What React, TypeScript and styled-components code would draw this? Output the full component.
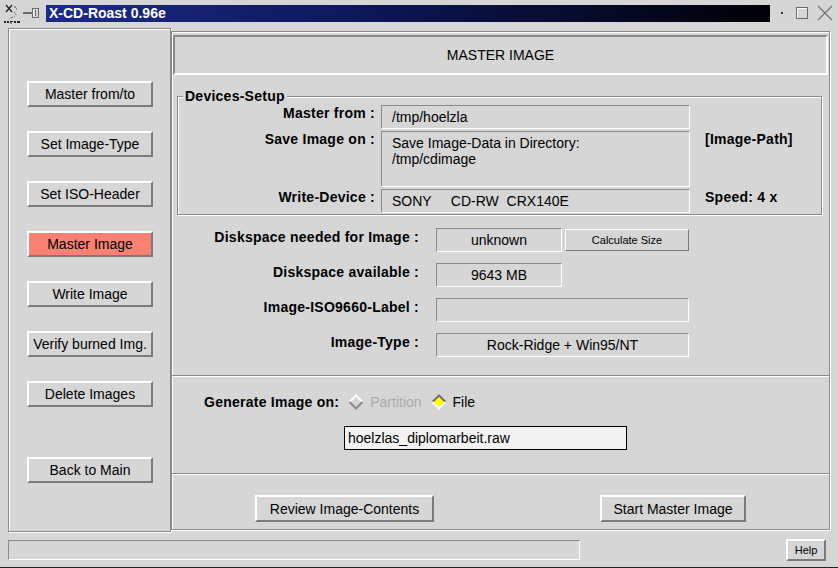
import React from "react";
import styled, { createGlobalStyle, css } from "styled-components";

const BG = "#d6d6d6";
const DARK = "#8a8a8a";

const GlobalStyle = createGlobalStyle`
  html, body { margin: 0; padding: 0; background: ${BG}; }
  body {
    font-family: "Liberation Sans", Arial, Helvetica, sans-serif;
    font-size: 14px;
    color: #000;
  }
  * { box-sizing: border-box; }
`;

const raised = css`
  border-style: solid;
  border-color: #fff #7a7a7a #7a7a7a #fff;
`;

const sunken = css`
  border-style: solid;
  border-color: ${DARK} #fff #fff ${DARK};
`;

const etched = css`
  border: 1px solid ${DARK};
  box-shadow: inset 1px 1px 0 #fff, 1px 1px 0 #fff;
`;

const Window = styled.div`
  width: 838px;
  height: 568px;
  display: flex;
  flex-direction: column;
  background: ${BG};
  border-bottom: 1px solid #222;
  overflow: hidden;
`;

const TitleBar = styled.div`
  height: 26px;
  flex: none;
  display: flex;
  align-items: center;
  padding-left: 3px;
`;

const TitleText = styled.div`
  width: 724px;
  height: 17px;
  margin-left: 6px;
  padding-left: 3px;
  background: linear-gradient(to right, #1b2b88 0%, #0d1656 45%, #000006 100%);
  color: #fff;
  font-weight: bold;
  font-size: 14px;
  line-height: 17px;
  white-space: nowrap;
`;

const WinControls = styled.svg`
  margin-left: 5px;
  flex: none;
`;

const Main = styled.div`
  flex: 1;
  display: flex;
  align-items: flex-start;
  padding: 2px 0 0 8px;
`;

const LeftPanel = styled.div`
  ${etched};
  width: 163px;
  height: 504px;
  display: flex;
  flex-direction: column;
  align-items: flex-start;
  padding: 52px 0 0 18px;
`;

const NavButton = styled.button<{ $active?: boolean; $apart?: boolean }>`
  ${raised};
  border-width: 2px;
  width: 126px;
  height: 26px;
  margin: ${(p) => (p.$apart ? "26px" : "0")} 0 24px 0;
  padding: 0;
  background: ${(p) => (p.$active ? "#fa8072" : BG)};
  font-family: inherit;
  font-size: 14px;
  color: #000;
  line-height: 20px;
  white-space: nowrap;
`;

const RightPanel = styled.div`
  ${etched};
  width: 659px;
  height: 499px;
  margin-top: 3px;
  display: flex;
  flex-direction: column;
`;

const Header = styled.div`
  ${sunken};
  border-width: 2px;
  height: 40px;
  margin: 3px 1px 0 1px;
  display: flex;
  align-items: center;
  justify-content: center;
  font-size: 14px;
`;

const Frame = styled.div`
  ${etched};
  margin: 21px 7px 0 5px;
  padding-bottom: 1px;
  display: flex;
  flex-direction: column;
`;

const FrameTitle = styled.div`
  align-self: flex-start;
  margin: -9px 0 0 5px;
  padding: 0 2px;
  background: ${BG};
  font-weight: bold;
  letter-spacing: 0.25px;
  line-height: 16px;
`;

const DeviceGrid = styled.div`
  display: grid;
  grid-template-columns: 203px 309px 1fr;
  grid-template-rows: 24px 56px 24px;
  row-gap: 2px;
  margin-top: 1px;
`;

const Label = styled.div<{ $pad?: number; $line?: number }>`
  font-weight: bold;
  letter-spacing: 0.25px;
  text-align: right;
  white-space: nowrap;
  padding-right: ${(p) => p.$pad ?? 6}px;
  line-height: ${(p) => p.$line ?? 16}px;
`;

const Note = styled.div`
  font-weight: bold;
  letter-spacing: 0.25px;
  padding-left: 15px;
  line-height: 16px;
  white-space: nowrap;
`;

const Field = styled.div<{ $center?: boolean; $wide?: boolean }>`
  ${sunken};
  border-width: 1px;
  white-space: pre;
  ${(p) =>
    p.$center
      ? css`
          text-align: center;
          line-height: 22px;
        `
      : css`
          padding: 3px 10px 0;
          line-height: 16px;
        `}
  ${(p) => p.$wide && "grid-column: 2 / span 2;"}
`;

const DiskGrid = styled.div`
  display: grid;
  grid-template-columns: 264px 126px 127px;
  grid-auto-rows: 24px;
  row-gap: 11px;
  margin-top: 13px;
  padding-bottom: 18px;
`;

const SmallButton = styled.button`
  ${raised};
  border-width: 1px;
  margin: 1px 0 1px 3px;
  padding: 0;
  background: ${BG};
  font-family: inherit;
  font-size: 11px;
  color: #000;
`;

const Separator = styled.div`
  height: 2px;
  flex: none;
  border-top: 1px solid ${DARK};
  border-bottom: 1px solid #fff;
`;

const GenerateSection = styled.div`
  display: flex;
  flex-direction: column;
  padding: 17px 0 23px 0;
`;

const RadioRow = styled.div`
  display: flex;
  align-items: center;
  padding-left: 32px;
  line-height: 16px;
  gap: 9px;
`;

const RadioOption = styled.span<{ $disabled?: boolean }>`
  display: inline-flex;
  align-items: center;
  gap: 6px;
  color: ${(p) => (p.$disabled ? "#a9a9a9" : "#000")};
`;

const FileInput = styled.input`
  width: 283px;
  height: 24px;
  margin: 16px 0 0 172px;
  padding: 0 3px;
  border: 1px solid #000;
  background: #f2f2f2;
  font-family: inherit;
  font-size: 14px;
  color: #000;
  outline: none;
`;

const ActionRow = styled.div`
  flex: 1;
  display: flex;
  justify-content: space-around;
  align-items: flex-start;
  padding-top: 20px;
`;

const ActionButton = styled.button<{ $w: number }>`
  ${raised};
  border-width: 2px;
  width: ${(p) => p.$w}px;
  height: 27px;
  padding: 0;
  background: ${BG};
  font-family: inherit;
  font-size: 14px;
  color: #000;
  white-space: nowrap;
`;

const StatusBar = styled.div`
  height: 34px;
  flex: none;
  display: flex;
  align-items: center;
  padding: 0 12px 0 8px;
`;

const StatusField = styled.div`
  ${sunken};
  border-width: 1px;
  width: 572px;
  height: 20px;
`;

const HelpButton = styled.button`
  ${raised};
  border-width: 2px;
  width: 40px;
  height: 22px;
  margin-left: auto;
  padding: 0;
  background: ${BG};
  font-family: inherit;
  font-size: 11px;
  color: #000;
`;

const Diamond: React.FC<{ selected?: boolean }> = ({ selected }) => {
  const upper = selected ? "#6e6e6e" : "#fff";
  const lower = selected ? "#fff" : "#8a8a8a";
  return (
    <svg width="16" height="16" viewBox="0 0 16 16">
      <path d="M8 1 L15 8 L8 15 L1 8 Z" fill={selected ? "#ffff00" : BG} />
      <path d="M1.5 8 L8 1.5 L14.5 8" stroke={upper} strokeWidth="2" fill="none" />
      <path d="M1.5 8 L8 14.5 L14.5 8" stroke={lower} strokeWidth="2" fill="none" />
    </svg>
  );
};

const AppLogo = () => (
  <svg width="20" height="22" viewBox="0 0 20 22" style={{ flex: "none" }}>
    <path d="M3 3 L9 10 M9 3 L3 10" stroke="#222" strokeWidth="1.3" />
    <path d="M11 10 Q15 13 10 15 Q5 16.5 7 18" stroke="#222" strokeWidth="1" strokeDasharray="1 1.4" fill="none" />
    <path d="M11 5 h2 M13 7 h1" stroke="#444" strokeWidth="1" />
    <rect x="1" y="19" width="2" height="2" fill="#222" />
    <rect x="4" y="19" width="2" height="2" fill="#222" />
    <rect x="7" y="19" width="3" height="1" fill="#222" />
    <rect x="7" y="20.5" width="2" height="1" fill="#222" />
    <rect x="11" y="19" width="2" height="2" fill="#222" />
    <rect x="14" y="19" width="3" height="2" fill="#222" />
  </svg>
);

const PinIcon = () => (
  <svg width="17" height="12" viewBox="0 0 17 12" style={{ flex: "none" }}>
    <path d="M0 6 H9" stroke="#6a6a6a" strokeWidth="2" />
    <rect x="9.5" y="1.5" width="6" height="9" fill="none" stroke="#6a6a6a" />
    <path d="M12.5 3 V9" stroke="#6a6a6a" />
    <path d="M10.5 2.5 V9.5" stroke="#fff" />
  </svg>
);

const App: React.FC = () => {
  return (
    <Window>
      <GlobalStyle />
      <TitleBar>
        <AppLogo />
        <PinIcon />
        <TitleText>X-CD-Roast 0.96e</TitleText>
        <WinControls width="60" height="16" viewBox="0 0 60 16">
          <rect x="6" y="7" width="2" height="2" fill="#333" />
          <rect x="21.5" y="2.5" width="11" height="11" fill="none" stroke="#6a6a6a" />
          <path d="M22.5 12.5 V3.5 H31.5" stroke="#fff" fill="none" />
          <path d="M43 1 L57 15 M57 1 L43 15" stroke="#777" strokeWidth="1.4" />
        </WinControls>
      </TitleBar>

      <Main>
        <LeftPanel>
          <NavButton>Master from/to</NavButton>
          <NavButton>Set Image-Type</NavButton>
          <NavButton>Set ISO-Header</NavButton>
          <NavButton $active>Master Image</NavButton>
          <NavButton>Write Image</NavButton>
          <NavButton>Verify burned Img.</NavButton>
          <NavButton>Delete Images</NavButton>
          <NavButton $apart>Back to Main</NavButton>
        </LeftPanel>

        <RightPanel>
          <Header>MASTER IMAGE</Header>

          <Frame>
            <FrameTitle>Devices-Setup</FrameTitle>
            <DeviceGrid>
              <Label>Master from :</Label>
              <Field>/tmp/hoelzla</Field>
              <div />
              <Label>Save Image on :</Label>
              <Field>{"Save Image-Data in Directory:\n/tmp/cdimage"}</Field>
              <Note>[Image-Path]</Note>
              <Label>Write-Device :</Label>
              <Field>{"SONY     CD-RW  CRX140E"}</Field>
              <Note>Speed: 4 x</Note>
            </DeviceGrid>
          </Frame>

          <DiskGrid>
            <Label $pad={17} $line={18}>Diskspace needed for Image :</Label>
            <Field $center>unknown</Field>
            <SmallButton>Calculate Size</SmallButton>
            <Label $pad={17} $line={18}>Diskspace available :</Label>
            <Field $center>9643 MB</Field>
            <div />
            <Label $pad={17} $line={18}>Image-ISO9660-Label :</Label>
            <Field $center $wide />
            <Label $pad={17} $line={18}>Image-Type :</Label>
            <Field $center $wide>Rock-Ridge + Win95/NT</Field>
          </DiskGrid>

          <Separator />

          <GenerateSection>
            <RadioRow>
              <Label $pad={0}>Generate Image on:</Label>
              <RadioOption $disabled>
                <Diamond />
                Partition
              </RadioOption>
              <RadioOption>
                <Diamond selected />
                File
              </RadioOption>
            </RadioRow>
            <FileInput readOnly value="hoelzlas_diplomarbeit.raw" />
          </GenerateSection>

          <Separator />

          <ActionRow>
            <ActionButton $w={179}>Review Image-Contents</ActionButton>
            <ActionButton $w={146}>Start Master Image</ActionButton>
          </ActionRow>
        </RightPanel>
      </Main>

      <StatusBar>
        <StatusField />
        <HelpButton>Help</HelpButton>
      </StatusBar>
    </Window>
  );
};

export default App;
